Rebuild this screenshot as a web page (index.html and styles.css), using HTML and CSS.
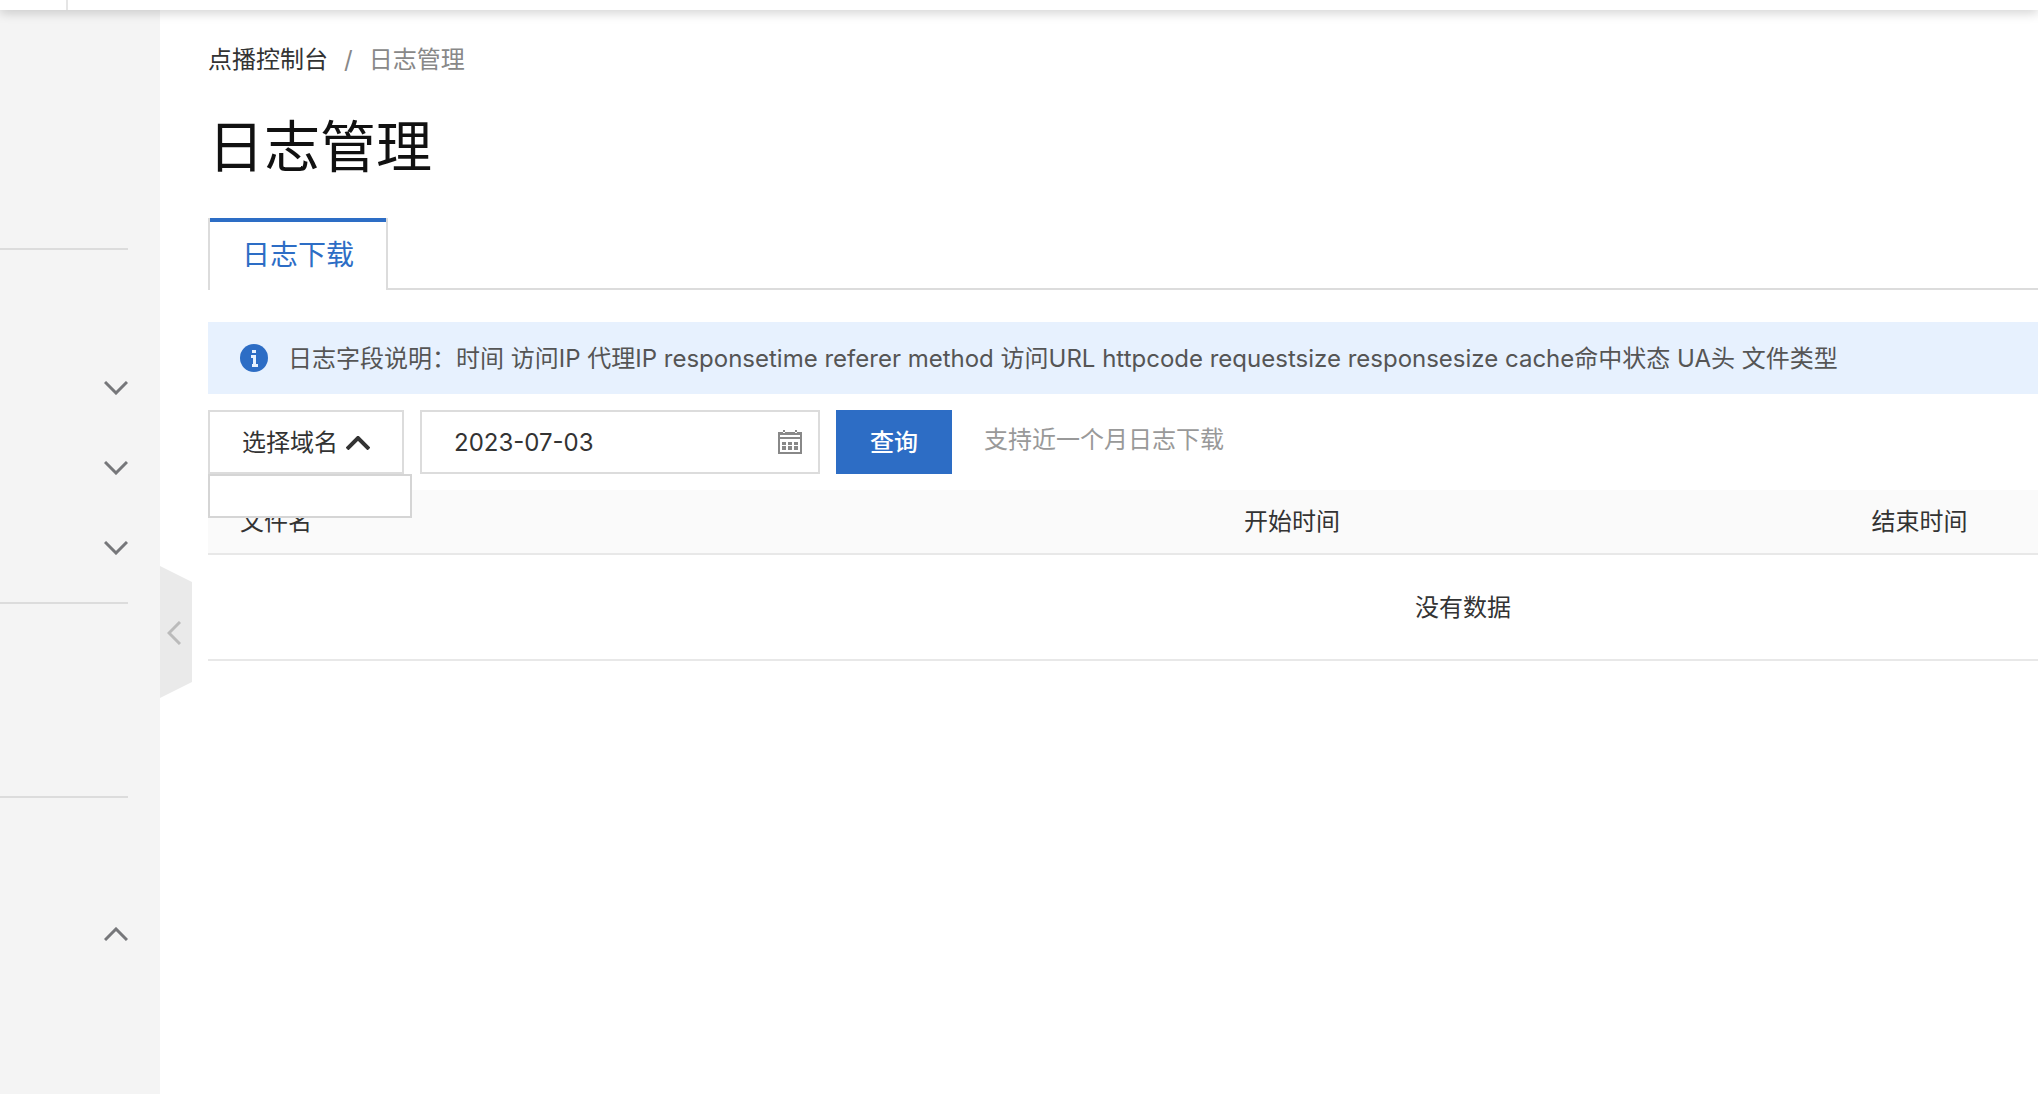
FILE: index.html
```html
<!DOCTYPE html>
<html lang="zh-CN">
<head>
<meta charset="utf-8">
<meta name="viewport" content="width=device-width, initial-scale=1">
<title>日志管理</title>
<link rel="stylesheet" href="styles.css">
</head>
<body>
<header class="topbar"><div class="topbar-menu"></div></header>
<div class="layout">
  <nav class="sidebar" aria-label="侧边导航">
    <div class="group group-head"></div>
    <div class="group group-menus">
      <button class="menu" type="button" aria-label="展开"><svg class="chevron" viewBox="0 0 24 14"><path d="M1 1l11 11L23 1"/></svg></button>
      <button class="menu" type="button" aria-label="展开"><svg class="chevron" viewBox="0 0 24 14"><path d="M1 1l11 11L23 1"/></svg></button>
      <button class="menu" type="button" aria-label="展开"><svg class="chevron" viewBox="0 0 24 14"><path d="M1 1l11 11L23 1"/></svg></button>
    </div>
    <div class="group group-links"></div>
    <div class="group group-last">
      <button class="menu" type="button" aria-label="收起"><svg class="chevron" viewBox="0 0 24 14"><path d="M1 13L12 2l11 11"/></svg></button>
    </div>
    <button class="collapse" type="button" aria-label="收起侧边栏"><svg class="collapse-icon" viewBox="0 0 14 24"><path d="M13 1L2 12l11 11"/></svg></button>
  </nav>
  <main class="content">
    <nav class="breadcrumb" aria-label="面包屑">
      <a href="#">点播控制台</a><span class="slash">/</span><span>日志管理</span>
    </nav>
    <h1 class="title">日志管理</h1>
    <div class="tabs" role="tablist">
      <button class="tab" type="button" role="tab" aria-selected="true">日志下载</button>
      <div class="tabs-rest"></div>
    </div>
    <div class="notice">
      <svg class="notice-icon" viewBox="0 0 28 28"><circle cx="14" cy="14" r="14" fill="#2d6dc5"/><path d="M12 6h4v3h-4zM11 11h5v9h2v3h-6v-3h1v-6h-2z" fill="#e7f1fe"/></svg>
      <p>日志字段说明：时间 访问IP 代理IP responsetime referer method 访问URL httpcode requestsize responsesize cache命中状态 UA头 文件类型</p>
    </div>
    <form class="toolbar">
      <div class="dropdown">
        <button class="domain" type="button" aria-expanded="true">选择域名<svg class="domain-arrow" viewBox="0 0 24 14"><path d="M1 13L12 2l11 11"/></svg></button>
        <div class="dropdown-list"></div>
      </div>
      <div class="date">
        <input type="text" value="2023-07-03" aria-label="日期">
        <svg class="calendar" viewBox="0 0 24 24"><path d="M5 0h2v3H5zM17 0h2v3h-2zM0 2h24v22H0zM2 5v2h20V5zM2 9v13h20V9z" fill-rule="evenodd"/><path d="M4 12h4v3H4zM10 12h4v3h-4zM16 12h4v3h-4zM4 16h4v4H4zM10 16h4v4h-4zM16 16h4v4h-4z"/></svg>
      </div>
      <button class="query" type="button">查询</button>
      <span class="hint">支持近一个月日志下载</span>
    </form>
    <div class="table-wrap">
      <table class="logs">
        <colgroup><col class="col-name"><col class="col-time"><col class="col-time"><col></colgroup>
        <thead><tr><th>文件名</th><th>开始时间</th><th>结束时间</th><th></th></tr></thead>
        <tbody><tr><td colspan="4">没有数据</td></tr></tbody>
      </table>
    </div>
  </main>
</div>
</body>
</html>
```
FILE: styles.css
```css
* { box-sizing: border-box; }

body {
  margin: 0;
  min-height: 100vh;
  display: flex;
  flex-direction: column;
  background: #fff;
  color: #333;
  font: 24px/36px Inter, "Noto Sans CJK SC", sans-serif;
}

button, input {
  margin: 0;
  padding: 0;
  border: 0;
  border-radius: 0;
  background: none;
  color: inherit;
  font: inherit;
}

svg { display: block; flex: none; fill: none; stroke-width: 3; }

.topbar {
  position: relative;
  z-index: 2;
  height: 10px;
  background: #fff;
  box-shadow: 0 2px 12px rgba(0, 0, 0, .22);
}
.topbar-menu { width: 68px; height: 100%; border-right: 2px solid #e5e5e5; }

.layout { flex: 1; display: flex; }

/* Side navigation */
.sidebar {
  position: relative;
  flex: none;
  width: 160px;
  padding-right: 32px;
  background: #f4f4f4;
}
.group { border-bottom: 2px solid #dcdcdc; }
.group-head { height: 240px; }
.group-menus { padding: 98px 0 14px; }
.group-links { height: 194px; }
.group-last { padding-top: 96px; border: 0; }
.menu {
  display: flex;
  align-items: center;
  justify-content: flex-end;
  width: 100%;
  height: 80px;
}
.chevron { width: 24px; height: 14px; stroke: #76777a; }

.collapse {
  position: absolute;
  top: 556px;
  left: 100%;
  width: 32px;
  height: 132px;
  padding: 2px 0 0 7px;
  background: #eaeaea;
  clip-path: polygon(0 0, 100% 16px, 100% 116px, 0 100%);
}
.collapse-icon { width: 14px; height: 24px; stroke: #bbb; }

/* Page content */
.content { flex: 1; min-width: 0; padding: 32px 0 0 48px; }

.breadcrumb { display: flex; color: #888; }
.breadcrumb a { color: #333; text-decoration: none; }
.slash { margin: 0 16px; }

.title {
  margin: 28px 0 30px;
  color: #111;
  font-size: 56px;
  font-weight: 400;
  line-height: 82px;
}

.tabs { display: flex; }
.tab {
  position: relative;
  height: 72px;
  padding: 2px 32px 0;
  border: solid #dcdcdc;
  border-width: 0 2px;
  color: #2d6dc5;
  font-size: 28px;
}
.tab::before {
  content: "";
  position: absolute;
  inset: 0 0 auto;
  height: 4px;
  background: #2d6dc5;
}
.tabs-rest { flex: 1; border-bottom: 2px solid #dcdcdc; }

.notice {
  display: flex;
  align-items: center;
  gap: 20px;
  min-height: 72px;
  margin-top: 32px;
  padding: 0 32px;
  background: #e7f1fe;
  color: #555;
}
.notice p { margin: 0; padding-top: 2px; }
.notice-icon { width: 28px; height: 28px; }

.toolbar { display: flex; align-items: center; gap: 16px; margin: 16px 0; }

.dropdown { position: relative; }
.domain {
  display: flex;
  align-items: center;
  gap: 8px;
  height: 64px;
  padding: 2px 32px 0;
  border: 2px solid #dcdcdc;
}
.domain-arrow { width: 24px; height: 14px; stroke: #333; stroke-width: 4; }
.dropdown-list {
  position: absolute;
  z-index: 1;
  top: 100%;
  left: 0;
  width: 204px;
  height: 44px;
  border: 2px solid #d5d5d5;
  background: #fff;
}

.date {
  display: flex;
  align-items: center;
  width: 400px;
  height: 64px;
  padding: 0 16px 0 32px;
  border: 2px solid #dcdcdc;
}
.date input { flex: 1; min-width: 0; padding-top: 2px; }
.calendar { width: 24px; height: 24px; fill: #888; }

.query { height: 64px; padding: 2px 34px 0; background: #2d6dc5; color: #fff; font-weight: 500; }
.hint { margin-left: 16px; padding-bottom: 4px; color: #999; }

/* The table is wider than the page and runs off the right edge */
.table-wrap { overflow: hidden; }
.logs { width: calc(100% + 680px); table-layout: fixed; border-collapse: separate; border-spacing: 0; }
.col-name { width: 40%; }
.col-time { width: 25%; }
.logs th, .logs td { padding: 0 32px; border-bottom: 2px solid #e8e8e8; }
.logs th { height: 65px; background: #fafafa; text-align: left; font-weight: 400; }
.logs td { height: 106px; padding-top: 2px; text-align: center; }
```
